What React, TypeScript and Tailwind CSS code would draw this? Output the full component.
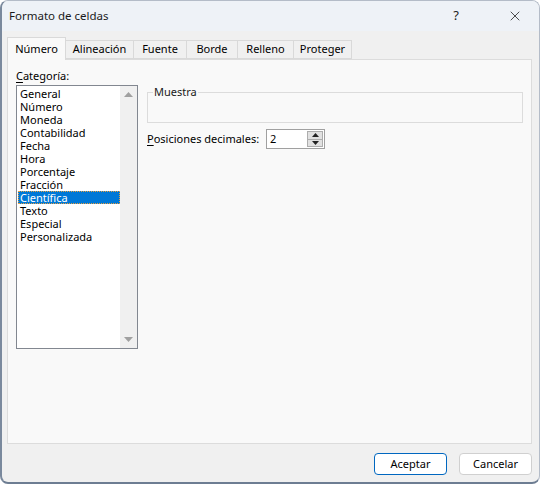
import { X } from "lucide-react";

const categories = [
  "General",
  "Número",
  "Moneda",
  "Contabilidad",
  "Fecha",
  "Hora",
  "Porcentaje",
  "Fracción",
  "Científica",
  "Texto",
  "Especial",
  "Personalizada",
];

const tabs = ["Número", "Alineación", "Fuente", "Borde", "Relleno", "Proteger"];

function TriUp({ className = "" }: { className?: string }) {
  return (
    <svg width="9" height="5" viewBox="0 0 9 5" className={className}>
      <path d="M4.5 0 L9 5 L0 5 Z" fill="currentColor" />
    </svg>
  );
}

function TriDown({ className = "" }: { className?: string }) {
  return (
    <svg width="9" height="5" viewBox="0 0 9 5" className={className}>
      <path d="M0 0 L9 0 L4.5 5 Z" fill="currentColor" />
    </svg>
  );
}

export default function App() {
  return (
    <div className="w-[540px] h-[484px] bg-white font-['Noto_Sans',sans-serif] text-[11px] text-black">
      <div className="w-full h-full flex flex-col rounded-[8px] overflow-hidden border border-[#b4bcc8] border-l-2 border-b-2 border-l-[#7a899d] border-b-[#6d7d92] bg-[#f0f0f0]">
        {/* Title bar */}
        <div className="h-[30px] shrink-0 flex items-center bg-[#eef2f7] pl-[7px]">
          <span className="flex-1 text-[11.5px] text-[#1a1a1a]">Formato de celdas</span>
          <span className="w-[20px] text-center text-[13px] text-[#222] mr-[41px]">?</span>
          <X size={16} strokeWidth={1.2} className="text-[#222] mr-[16px]" />
        </div>

        {/* Body */}
        <div className="flex-1 flex flex-col pt-[6px]">
          {/* Tabs */}
          <div className="flex items-end ml-[5px] h-[22px] relative z-10">
            {tabs.map((t, i) =>
              i === 0 ? (
                <div
                  key={t}
                  className="h-[23px] -mb-px w-[59px] flex items-center justify-center bg-[#f9f9f9] border border-b-0 border-[#d9d9d9]"
                >
                  {t}
                </div>
              ) : (
                <div
                  key={t}
                  className={`h-[19px] flex items-center justify-center bg-[#f0f0f0] border border-l-0 border-[#d9d9d9] ${
                    ["w-[68px]", "w-[53px]", "w-[51px]", "w-[56px]", "w-[58px]"][i - 1]
                  }`}
                >
                  {t}
                </div>
              )
            )}
          </div>

          {/* Pane */}
          <div className="ml-[5px] w-[525px] h-[385px] bg-[#f9f9f9] border border-[#dcdcdc] flex pl-[8px] pt-[9px] gap-[9px]">
            {/* Category column */}
            <div className="flex flex-col">
              <div className="h-[16px] leading-[14px]">
                <span className="underline underline-offset-2">C</span>ategoría:
              </div>
              <div className="w-[122px] h-[264px] bg-white border border-[#828790] flex">
                <div className="flex-1 pt-[1px] pl-[1px]">
                  {categories.map((c) =>
                    c === "Científica" ? (
                      <div
                        key={c}
                        className="h-[13px] leading-[13px] pl-[2px] bg-[#0078d7] text-white outline-1 outline-dotted outline-[#e8a040] -outline-offset-1"
                      >
                        {c}
                      </div>
                    ) : (
                      <div key={c} className="h-[13px] leading-[13px] pl-[2px]">
                        {c}
                      </div>
                    )
                  )}
                </div>
                <div className="w-[17px] bg-[#f0f0f0] flex flex-col items-center justify-between py-[6px] text-[#a0a0a0]">
                  <TriUp />
                  <TriDown />
                </div>
              </div>
            </div>

            {/* Right column */}
            <div className="flex flex-col pt-[17px] w-[376px]">
              <fieldset className="border border-[#dcdcdc] h-[37px] px-[5px]">
                <legend className="px-[1px] leading-[12px] text-[#1a1a1a]">Muestra</legend>
              </fieldset>
              <div className="flex items-center mt-[6px] h-[20px]">
                <span className="w-[119px] whitespace-nowrap">
                  <span className="underline underline-offset-2">P</span>osiciones decimales:
                </span>
                <div className="w-[59px] h-[20px] bg-white border border-[#a0a0a0] flex items-center">
                  <span className="flex-1 pl-[3px]">2</span>
                  <div className="w-[16px] h-[16px] mr-[1px] flex flex-col border border-[#adadad] bg-[#e1e1e1]">
                    <div className="flex-1 flex items-center justify-center border-b border-[#adadad] text-[#222]">
                      <TriUp className="w-[7px] h-[4px]" />
                    </div>
                    <div className="flex-1 flex items-center justify-center text-[#222]">
                      <TriDown className="w-[7px] h-[4px]" />
                    </div>
                  </div>
                </div>
              </div>
            </div>
          </div>

          {/* Buttons */}
          <div className="flex justify-end gap-[12px] pr-[7px] pt-[9px]">
            <button className="w-[73px] h-[22px] rounded-[4px] bg-white border border-[#0067c0]">
              Aceptar
            </button>
            <button className="w-[73px] h-[22px] rounded-[4px] bg-white border border-[#d0d0d0]">
              Cancelar
            </button>
          </div>
        </div>
      </div>
    </div>
  );
}
